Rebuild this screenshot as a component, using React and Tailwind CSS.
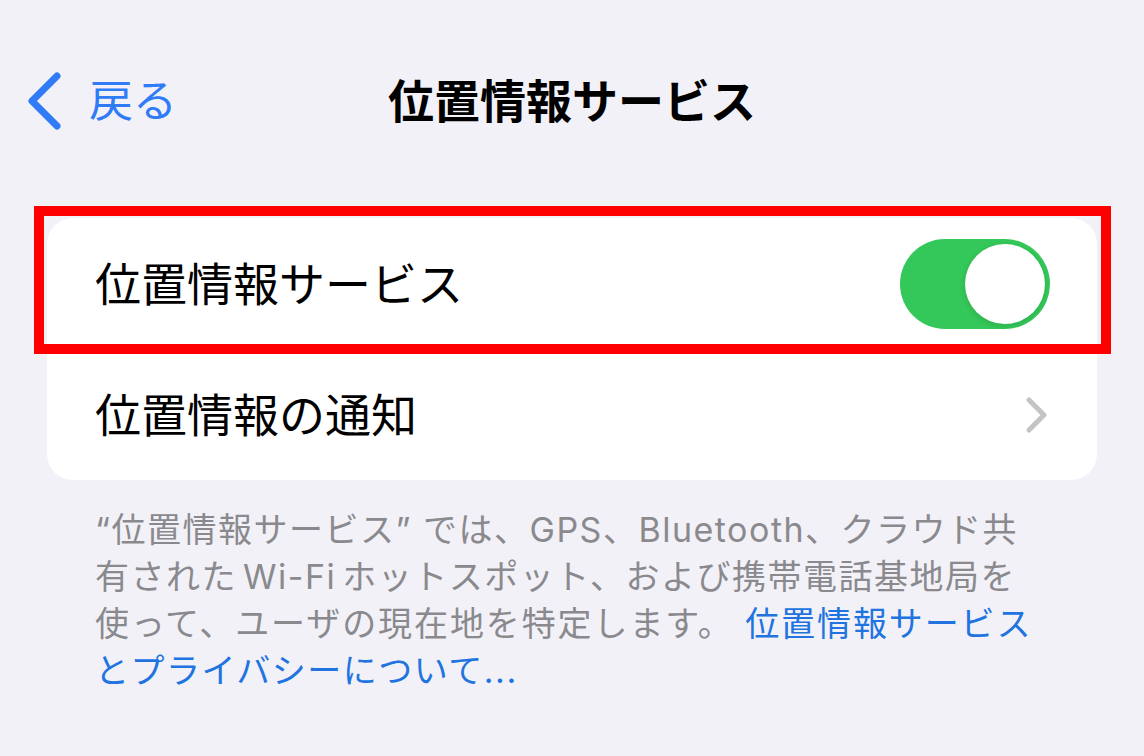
import React from "react";

const font = { fontFamily: 'Inter, "Noto Sans CJK JP", sans-serif' };

export default function App() {
  return (
    <div className="w-[1144px] h-[756px] bg-[#f2f1f7] overflow-hidden" style={font}>
      {/* Nav bar */}
      <div className="relative h-[200px] flex items-start pt-[72px]">
        <div className="flex items-center pl-[26px] h-[58px]">
          <svg width="38" height="58" viewBox="0 0 38 58" className="shrink-0">
            <polyline points="31,4 6,29 31,54" fill="none" stroke="#2f7cf6" strokeWidth="7" strokeLinecap="round" strokeLinejoin="round" />
          </svg>
          <span className="ml-[25px] text-[44px] leading-none text-[#2f7cf6]">戻る</span>
        </div>
        <div className="absolute left-0 right-0 top-[72px] h-[58px] flex items-center justify-center pointer-events-none">
          <span className="text-[46px] leading-none font-bold text-black">位置情報サービス</span>
        </div>
      </div>

      {/* Card */}
      <div className="relative mx-[47px] mt-[18px] bg-white rounded-[26px]">
        <div className="h-[132px] flex items-center justify-between pl-[48px] pr-[47px]">
          <span className="text-[46px] leading-none text-black">位置情報サービス</span>
          <div className="w-[150px] h-[90px] rounded-full bg-[#34c759] p-[5px] flex justify-end">
            <div className="w-[80px] h-[80px] rounded-full bg-white shadow-[0_2px_6px_rgba(0,0,0,0.12)]"></div>
          </div>
        </div>
        <div className="h-[130px] flex items-center justify-between pl-[48px] pr-[48px]">
          <span className="text-[46px] leading-none text-black">位置情報の通知</span>
          <svg width="24" height="38" viewBox="0 0 24 38">
            <polyline points="4,4 19,19 4,34" fill="none" stroke="#c4c4c7" strokeWidth="5" strokeLinecap="round" strokeLinejoin="round" />
          </svg>
        </div>
        {/* annotation box */}
        <div className="absolute left-[-13px] top-[-12px] w-[1077px] h-[148px] border-[10px] border-[#ff0000] pointer-events-none"></div>
      </div>

      {/* Footnote */}
      <div className="pl-[95px] mt-[26px] text-[34px] leading-[47px] tracking-[1.5px] text-[#8a8a8e] whitespace-nowrap">
        <div>“位置情報サービス” では、GPS、Bluetooth、クラウド共</div>
        <div>
          有された<span className="mx-[6px]">Wi-Fi</span>ホットスポット、および携帯電話基地局を
        </div>
        <div className="tracking-[1.9px]">
          使って、ユーザの現在地を特定します。 <span className="text-[#2174e0]">位置情報サービス</span>
        </div>
        <div className="text-[#2174e0]">とプライバシーについて...</div>
      </div>
    </div>
  );
}
